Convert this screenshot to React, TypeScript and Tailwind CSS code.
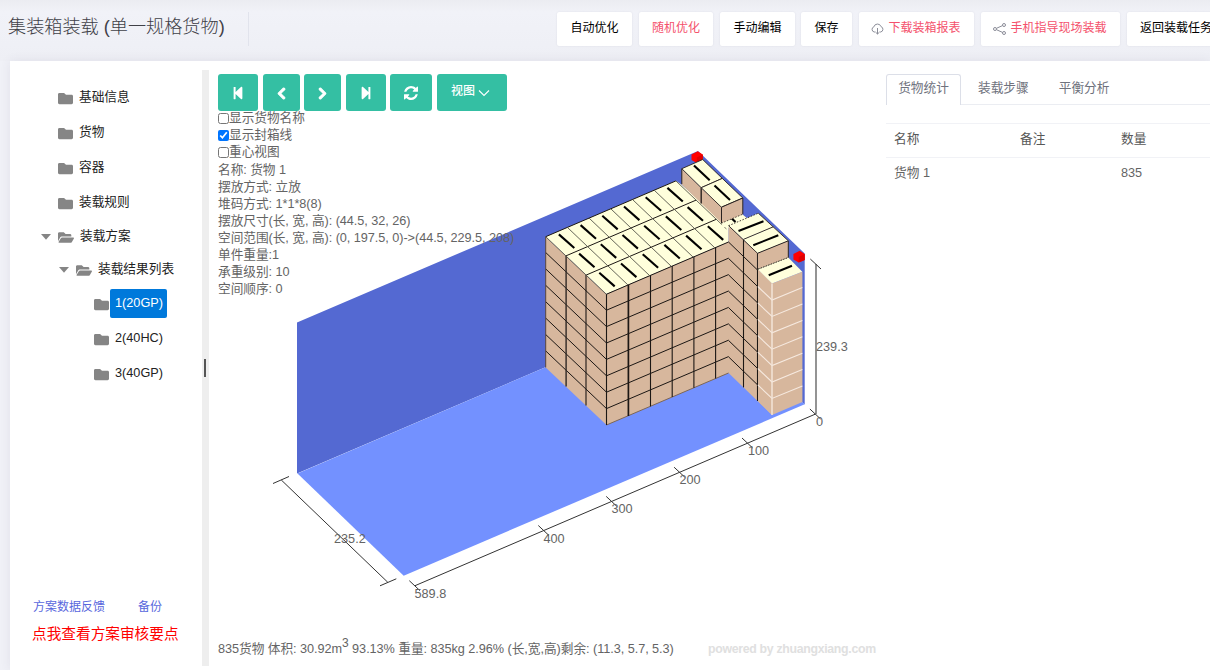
import React from "react";
import { FaStepBackward, FaChevronLeft, FaChevronRight, FaStepForward, FaFolder, FaFolderOpen } from "react-icons/fa";

type Pt = [number, number];

const pts = (list: Pt[]) => list.map((p) => p.join(",")).join(" ");
const range = (n: number) => Array.from({ length: n }, (_, i) => i);

const LEN: Pt = [21.7, -9.3];
const WID: Pt = [20.2, 19.2];
const LAYER = 16.4;
const TAN = "#d7b79d";
const CREAM = "#ffffdc";
const at = (o: Pt, a: number, b: number): Pt => [
  o[0] + LEN[0] * a + WID[0] * b,
  o[1] + LEN[1] * a + WID[1] * b,
];

function Line({ a, b, w = 1, c = "#1c1714" }: { a: Pt; b: Pt; w?: number; c?: string }) {
  return <line x1={a[0]} y1={a[1]} x2={b[0]} y2={b[1]} stroke={c} strokeWidth={w} />;
}

function Poly({ p, fill, stroke = "none", w = 1 }: { p: Pt[]; fill: string; stroke?: string; w?: number }) {
  return <polygon points={pts(p)} fill={fill} stroke={stroke} strokeWidth={w} />;
}

function MainBlock() {
  const o: Pt = [545.7, 236.7];
  return (
    <g>
      <Poly fill={TAN} p={[[545.7, 236.7], [606.5, 294], [606.5, 425], [545.7, 367.5]]} />
      <Poly fill={CREAM} p={[o, [676, 180.8], [682, 185], [728.6, 226], [728.6, 242], [606.5, 294]]} />
      <Poly fill={TAN} p={[[606.5, 294], [728.6, 242], [728.6, 225.5], [757.5, 253], [757.5, 269], [772, 283.5], [772, 415], [728.6, 373], [606.5, 425]]} />
      {range(7).map((i) => (
        <Line key={`l${i}`} a={[545.7, 252.5 + i * LAYER]} b={[606.5, 310.2 + i * LAYER]} />
      ))}
      {range(7).map((i) => (
        <Line key={`f${i}`} a={[606.5, 310.2 + i * LAYER]} b={[728.5, 258.2 + i * LAYER]} />
      ))}
      {range(8).map((i) => (
        <Line key={`r${i}`} a={[728.5, 242 + i * LAYER]} b={[757.5, 270 + i * LAYER]} />
      ))}
      <Line a={[606.5, 425]} b={[728.5, 373]} c="#7d6656" />
      <Line a={[566.1, 256]} b={[566.1, 386.5]} w={1.4} c="#2f2824" />
      <Line a={[586, 275]} b={[586, 405.5]} w={1.1} />
      <Line a={[545.7, 236.7]} b={[545.7, 367.5]} c="#58453f" />
      <Line a={[606.5, 294]} b={[606.5, 425]} w={1.1} />
      <Line a={[628.4, 285]} b={[628.4, 416]} w={1.7} />
      {range(4).map((i) => (
        <Line key={`v${i}`} a={[650.5 + i * 21.7, 275.3 - i * 9.3]} b={[650.5 + i * 21.7, 406.4 - i * 9.3]} w={1.1} />
      ))}
      <Line a={[743.5, 239.5]} b={[743.5, 387.4]} w={1.1} />
      <Line a={[757.5, 253]} b={[757.5, 401]} w={1.1} />
      {range(4).map((i) => (
        <Line key={`t${i}`} a={at(o, 0, i)} b={i === 3 ? [728.5, 242] : at(o, 6, i)} />
      ))}
      {range(7).map((i) => (
        <Line key={`s${i}`} a={at(o, i, 0)} b={at(o, i, i === 6 ? 2.5 : 3)} c="#55554a" w={0.9} />
      ))}
      {range(3).map((r) =>
        range(6).map((c) => {
          const p = at(o, c, r);
          return <Line key={`${r}-${c}`} a={[p[0] + 13.2, p[1] - 2.3]} b={[p[0] + 28.6, p[1] + 11.3]} w={2.1} c="#000" />;
        })
      )}
    </g>
  );
}

function RaisedBoxes() {
  const k = "#2a2320";
  return (
    <g>
      <Poly fill={CREAM} p={[[721, 222], [742, 214], [748, 219], [729, 227.5], [722.5, 227]]} />
      <Line a={[731.5, 218.3]} b={[735.5, 222]} w={2.2} c="#000" />
      <Poly fill={TAN} p={[[681.8, 168.7], [701.2, 187.7], [721.6, 207], [721.6, 223], [681.8, 184.5]]} />
      <Line a={[681.8, 168.7]} b={[681.8, 184]} c={k} />
      <Line a={[701.2, 187.7]} b={[701.2, 203.5]} c={k} w={1.4} />
      <Poly fill={CREAM} stroke={k} w={0.9} p={[[681.8, 168.7], [702.7, 159.5], [722.3, 178.4], [701.2, 187.7]]} />
      <Poly fill={CREAM} stroke={k} w={0.9} p={[[701.2, 187.7], [722.3, 178.4], [742.8, 198], [721.4, 207.2]]} />
      <Poly fill={TAN} p={[[721.4, 207.2], [742.8, 198], [742.8, 214.2], [721.4, 223.2]]} />
      <polyline points="721.5,223.2 721.5,207.2 742.8,198 742.8,214.2" fill="none" stroke={k} />
      <line x1={721.4} y1={223.2} x2={742.8} y2={214.2} stroke={k} strokeDasharray="1.5 1.5" strokeWidth={0.8} />
      <Line a={[694, 165.5]} b={[709.7, 180.3]} w={2.1} c="#000" />
      <Line a={[714.5, 185.4]} b={[730, 200]} w={2.1} c="#000" />
      <Poly fill={CREAM} p={[[728.6, 225.7], [758.3, 213.2], [773.3, 226.8], [743.4, 239.4]]} />
      <Poly fill={CREAM} p={[[743.4, 239.4], [773.3, 226.8], [788.3, 240.8], [757.5, 253.3]]} />
      <line x1={728.6} y1={225.7} x2={758.3} y2={213.2} stroke={k} strokeDasharray="1.5 1.5" strokeWidth={0.9} />
      <Line a={[743.4, 239.4]} b={[773.3, 226.8]} c={k} w={0.9} />
      <Line a={[728.6, 225.7]} b={[757.5, 253.3]} c={k} w={0.9} />
      <Line a={[758.3, 213.2]} b={[788.3, 240.8]} c={k} w={0.9} />
      <Poly fill={TAN} stroke={k} w={1} p={[[757.5, 253.3], [788.3, 240.8], [788.3, 258], [757.5, 269.6]]} />
      <Line a={[738.5, 231]} b={[763.5, 221.2]} w={2} c="#000" />
      <Line a={[753.3, 245.2]} b={[778.3, 235.3]} w={2} c="#000" />
      <Poly fill={TAN} p={[[758, 269.2], [772, 283.4], [802.4, 271.8], [802.4, 402], [772, 415], [758, 401]]} />
      <Poly fill={CREAM} p={[[757.8, 269.2], [788.3, 257.5], [802.3, 271.8], [772, 283.6]]} />
      <line x1={758} y1={269.2} x2={788.3} y2={257.5} stroke="#3b342c" strokeDasharray="1.5 1.2" />
      <Line a={[768.7, 275.3]} b={[792, 265.8]} w={2} c="#000" />
      {range(7).map((i) => (
        <polyline
          key={i}
          fill="none"
          stroke="#f6e9df"
          strokeWidth={1.1}
          points={pts([[757.8, 286.5 + i * LAYER], [772, 300 + i * LAYER], [802.4, 287.6 + i * LAYER]])}
        />
      ))}
      <Line a={[772, 283.6]} b={[772, 415]} c="#f3e4d9" w={1.5} />
    </g>
  );
}

function RedMark({ x, y }: { x: number; y: number }) {
  return (
    <g>
      <Poly fill="#ff0000" p={[[x - 5.8, y - 2.5], [x + 0.5, y - 5.8], [x + 5.5, y - 2.5], [x + 5.5, y + 3.5], [x - 0.5, y + 6], [x - 5.8, y + 3]]} />
      <Poly fill="#e00000" p={[[x - 0.5, y + 0.5], [x + 5.5, y - 2.5], [x + 5.5, y + 3.5], [x - 0.5, y + 6]]} />
    </g>
  );
}

const axisLabels: { x: number; y: number; t: string }[] = [
  { x: 816, y: 351, t: "239.3" },
  { x: 816, y: 426, t: "0" },
  { x: 748, y: 455, t: "100" },
  { x: 679.5, y: 484, t: "200" },
  { x: 611.5, y: 513, t: "300" },
  { x: 543.5, y: 543, t: "400" },
  { x: 414.5, y: 598, t: "589.8" },
  { x: 334, y: 543, t: "235.2" },
];

function Axes() {
  const c = "#333";
  const marks: Pt[] = [[815.6, 414], [747.7, 443], [679.8, 472.2], [611.9, 501.4], [544, 530.5], [415, 585.7]];
  return (
    <g>
      <Line a={[281.3, 480]} b={[387.8, 582.3]} c={c} />
      <Line a={[273, 483.5]} b={[289, 476.5]} c={c} />
      <Line a={[380, 585.8]} b={[396.3, 578.8]} c={c} />
      <Line a={[415, 585.7]} b={[815.6, 414]} c={c} />
      <Line a={[816, 264]} b={[816, 414]} c="#666" w={1.4} />
      <Line a={[810.3, 259]} b={[821, 269]} c={c} />
      {marks.map((m) => (
        <Line key={m[0]} a={[m[0] - 5.7, m[1] - 5]} b={[m[0] + 5, m[1] + 5]} c={c} />
      ))}
      {axisLabels.map((l) => (
        <text key={l.t} x={l.x} y={l.y} fill="#646464" fontSize={12.7}>
          {l.t}
        </text>
      ))}
    </g>
  );
}

function Scene() {
  return (
    <svg className="absolute top-0 left-0" width={677} height={609} viewBox="209 61 677 609">
      <Poly fill="#5469d2" p={[[297, 322.5], [698, 151], [804.7, 253.5], [804.7, 404.5], [698, 302], [297, 473.5]]} />
      <Poly fill="#7391ff" p={[[297.5, 473.5], [698, 302], [804.7, 404.3], [403.7, 575.7]]} />
      <RedMark x={697.3} y={157} />
      <MainBlock />
      <RaisedBoxes />
      <RedMark x={799.2} y={256.5} />
      <Axes />
    </svg>
  );
}

function TreeRow({ label, icon, caret, pad, h, selected }: { label: string; icon: "open" | "closed"; caret?: boolean; pad: string; h: string; selected?: boolean }) {
  return (
    <div className={`flex items-center ${pad} ${h}`}>
      <span className="flex w-[18px] shrink-0 pt-px pl-px">
        {caret && (
          <svg width="10" height="6" viewBox="0 0 10 6" fill="#858585"><path d="M0 0h10L5 5.8z" /></svg>
        )}
      </span>
      {icon === "open" ? (
        <FaFolderOpen className="mt-[2px] h-[15px] w-[16px] shrink-0 text-[#858585]" />
      ) : (
        <FaFolder className="mt-[2px] h-[15px] w-[15px] shrink-0 text-[#858585]" />
      )}
      <span className={selected ? "ml-px flex h-[29px] items-center rounded-[2px] bg-[#0079db] pr-1 pl-[5px] text-white" : "ml-1.5 whitespace-nowrap text-[#222]"}>{label}</span>
    </div>
  );
}

function Sidebar() {
  return (
    <aside className="flex w-[192px] shrink-0 flex-col pt-[19px]">
      <TreeRow label="基础信息" icon="closed" pad="pl-[30px]" h="h-[35px]" />
      <TreeRow label="货物" icon="closed" pad="pl-[30px]" h="h-[35px]" />
      <TreeRow label="容器" icon="closed" pad="pl-[30px]" h="h-[35px]" />
      <TreeRow label="装载规则" icon="closed" pad="pl-[30px]" h="h-[35px]" />
      <TreeRow label="装载方案" icon="open" caret pad="pl-[30px]" h="h-[33px]" />
      <TreeRow label="装载结果列表" icon="open" caret pad="pl-[48px]" h="h-[33px]" />
      <TreeRow label="1(20GP)" icon="closed" pad="pl-[66px]" h="h-[35px]" selected />
      <TreeRow label="2(40HC)" icon="closed" pad="pl-[66px]" h="h-[35px]" />
      <TreeRow label="3(40GP)" icon="closed" pad="pl-[66px]" h="h-[35px]" />
      <div className="mt-auto mb-[25px] pl-[22px]">
        <div className="flex gap-[33px] pl-px text-[12px] leading-[18px] text-[#5867dd]">
          <span>方案数据反馈</span>
          <span>备份</span>
        </div>
        <div className="mt-[7px] text-[14.67px] leading-[22px] text-[#f00]">点我查看方案审核要点</div>
      </div>
    </aside>
  );
}

const btn = "flex h-[37px] items-center justify-center rounded-[3px] bg-[#34bfa3] pt-px text-white";

function Viewer() {
  return (
    <main className="relative flex w-[677px] shrink-0 flex-col pl-[9px]">
      <Scene />
      <div className="relative flex pt-[13px]">
        <button className={`${btn} mr-[5px] w-[40px]`}><FaStepBackward className="size-[14px]" /></button>
        <button className={`${btn} mr-1 w-[37px]`}><FaChevronLeft className="size-[13px] stroke-white stroke-[40]" /></button>
        <button className={`${btn} mr-[5px] w-[37px]`}><FaChevronRight className="size-[13px] stroke-white stroke-[40]" /></button>
        <button className={`${btn} mr-1 w-[40px]`}><FaStepForward className="size-[14px]" /></button>
        <button className={`${btn} mr-[5px] w-[42px]`}>
          <svg width="14" height="14" viewBox="0 0 1536 1536" fill="currentColor">
            <path d="M1511 928q0 5-1 7-64 268-268 434.5t-478 166.5q-146 0-282.5-55t-243.5-157l-129 129q-19 19-45 19t-45-19-19-45v-448q0-26 19-45t45-19h448q26 0 45 19t19 45-19 45l-137 137q71 66 161 102t187 36q134 0 250-65t186-179q11-17 53-117 8-23 30-23h192q13 0 22.5 9.5t9.5 22.5zm25-800v448q0 26-19 45t-45 19h-448q-26 0-45-19t-19-45 19-45l138-138q-148-137-349-137-134 0-250 65t-186 179q-11 17-53 117-8 23-30 23h-199q-13 0-22.5-9.5t-9.5-22.5v-7q65-268 270-434.5t480-166.5q146 0 284 55.5t245 156.5l130-129q19-19 45-19t45 19 19 45z" />
          </svg>
        </button>
        <button className={`${btn} w-[70px] gap-[3px] pr-[3px] text-[12px] font-medium`}>
          <span className="-mt-1">视图</span>
          <svg width="12" height="8" viewBox="0 0 12 8" fill="none" stroke="white" strokeWidth="1.1"><path d="M1 1.5 6 6.5 11 1.5" /></svg>
        </button>
      </div>
      <div className="relative -mt-px flex flex-col leading-[17px] tracking-[-0.05px] whitespace-nowrap text-[#646464]">
        {[
          { t: "显示货物名称", c: false },
          { t: "显示封箱线", c: true },
          { t: "重心视图", c: false },
        ].map((o) => (
          <label key={o.t} className="flex h-[17px] items-center">
            <input type="checkbox" defaultChecked={o.c} className="size-[11px]" />
            <span>{o.t}</span>
          </label>
        ))}
        <div className="pt-px">
          <div>名称: 货物 1</div>
          <div>摆放方式: 立放</div>
          <div>堆码方式: 1*1*8(8)</div>
          <div>摆放尺寸(长, 宽, 高): (44.5, 32, 26)</div>
          <div>空间范围(长, 宽, 高): (0, 197.5, 0)-&gt;(44.5, 229.5, 208)</div>
          <div>单件重量:1</div>
          <div>承重级别: 10</div>
          <div>空间顺序: 0</div>
        </div>
      </div>
      <div className="relative mt-auto mb-[11px] flex h-[20px] items-center whitespace-nowrap text-[#646464]">
        <div className="w-[490px] pt-px tracking-[-0.05px]">
          835货物 体积: 30.92m<sup className="text-[12px] leading-none">3</sup> 93.13% 重量: 835kg 2.96% (长,宽,高)剩余: (11.3, 5.7, 5.3)
        </div>
        <div className="text-[12.3px] font-bold tracking-[-0.3px] text-[#e0e0e0]">powered by zhuangxiang.com</div>
      </div>
    </main>
  );
}

function StatsPanel() {
  return (
    <section className="flex min-w-0 grow flex-col pt-[13px] text-[#646464]">
      <div className="flex h-[31px] border-b border-[#ebedf2] text-[#6f727d]">
        <div className="flex h-[31px] w-[75px] items-center justify-center rounded-t-[3px] border border-b-0 border-[#dcdfe8] bg-white pb-0.5">货物统计</div>
        <div className="flex items-center pb-px pl-[17px]">装载步骤</div>
        <div className="flex items-center pb-px pl-[30px]">平衡分析</div>
      </div>
      <div className="mt-[18px] grid h-[35px] grid-cols-[126px_101px_1fr] items-center border-y border-[#f1f2f6] pb-0.5 pl-2 text-[#575757]">
        <span>名称</span>
        <span>备注</span>
        <span>数量</span>
      </div>
      <div className="grid h-[32px] grid-cols-[126px_101px_1fr] items-center pl-2">
        <span>货物 1</span>
        <span />
        <span>835</span>
      </div>
    </section>
  );
}

const tool = "flex h-[34px] shrink-0 items-center justify-center rounded-[2px] bg-white pb-0.5 text-[12px] whitespace-nowrap shadow-[0_0_2px_rgba(70,70,110,0.12)]";

function Header() {
  return (
    <header className="flex h-[61px] shrink-0 bg-linear-to-b from-[#ebecf1] via-[#f1f2f8] via-20% to-[#eeeff5] pt-3">
      <div className="flex h-[34px] w-[249px] shrink-0 items-center border-r border-[#e1e3ec] pb-0.5 pl-[8px] text-[18.15px] font-light whitespace-nowrap text-[#3f4047]">集装箱装载 (单一规格货物)</div>
      <div className="ml-[308px] flex">
        <div className={`${tool} mr-[7px] w-[75px] text-black`}>自动优化</div>
        <div className={`${tool} mr-[7px] w-[74px] text-[#f4516c]`}>随机优化</div>
        <div className={`${tool} mr-[6px] w-[75px] text-black`}>手动编辑</div>
        <div className={`${tool} mr-[7px] w-[51px] text-black`}>保存</div>
        <div className={`${tool} mr-[7px] w-[115px] gap-1 pr-px text-[#f4516c]`}>
          <svg className="mt-0.5" width="13" height="12" viewBox="0 0 13 12" fill="none" stroke="#8b8d98" strokeWidth="1">
            <path d="M4.5 9H3.2A2.7 2.7 0 0 1 2.9 3.8 3.7 3.7 0 0 1 10 3.6 2.8 2.8 0 0 1 9.7 9H8.5M6.5 5v6M4.8 9.4 6.5 11l1.7-1.6" />
          </svg>
          下载装箱报表
        </div>
        <div className={`${tool} mr-[7px] w-[139px] gap-1 pr-px text-[#f4516c]`}>
          <svg className="mt-0.5" width="13" height="12" viewBox="0 0 13 12" fill="none" stroke="#8b8d98" strokeWidth="1">
            <circle cx="2" cy="6" r="1.5" />
            <circle cx="11" cy="2" r="1.5" />
            <circle cx="11" cy="10" r="1.5" />
            <path d="M3.5 5.3 9.5 2.6M3.5 6.7l6 2.7" />
          </svg>
          手机指导现场装载
        </div>
        <div className={`${tool} w-[98px] text-black`}>返回装载任务</div>
      </div>
    </header>
  );
}

export default function App() {
  return (
    <div className="flex h-[670px] w-[1210px] flex-col overflow-hidden bg-[#f0f1f7] text-[12.7px] [font-family:'Liberation_Sans','Noto_Sans_CJK_SC',sans-serif]">
      <Header />
      <div className="ml-[10px] flex grow bg-white shadow-[0_0_10px_rgba(82,63,105,0.09)]">
        <Sidebar />
        <div className="mt-[9px] mb-1 flex w-[7px] shrink-0 items-center bg-[#eee]">
          <div className="ml-[2px] h-[18px] w-[2px] bg-[#555]" />
        </div>
        <Viewer />
        <StatsPanel />
      </div>
    </div>
  );
}
